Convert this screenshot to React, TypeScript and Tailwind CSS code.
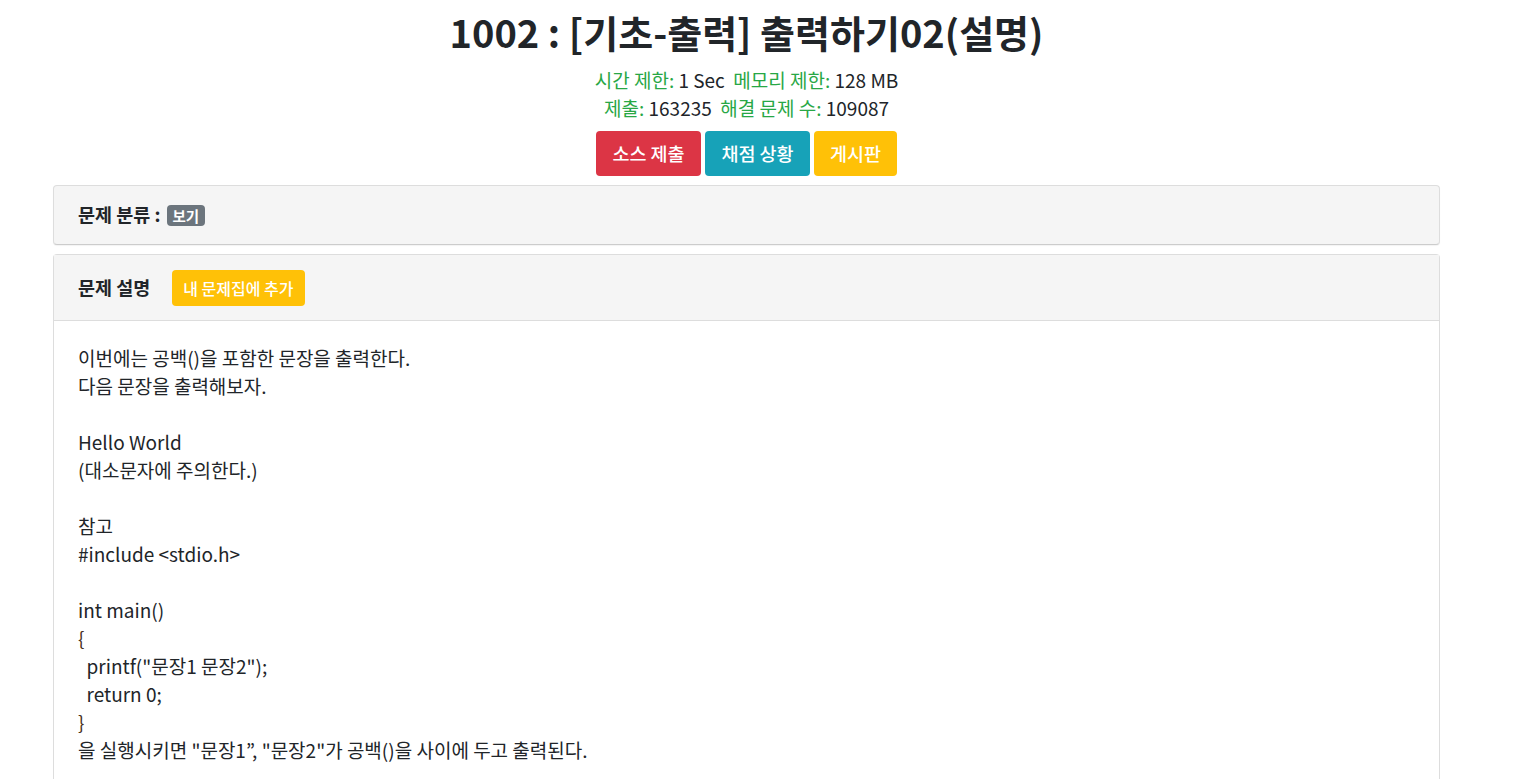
export default function App() {
  const body: (string | null)[] = [
    "이번에는 공백()을 포함한 문장을 출력한다.",
    "다음 문장을 출력해보자.",
    null,
    "Hello World",
    "(대소문자에 주의한다.)",
    null,
    "참고",
    "#include <stdio.h>",
    null,
    "int main()",
    "{",
    "  printf(\"문장1 문장2\");",
    "  return 0;",
    "}",
    "을 실행시키면 \"문장1”, \"문장2\"가 공백()을 사이에 두고 출력된다.",
    null,
  ]

  return (
    <div
      className="min-h-screen bg-white text-[#212529]"
      style={{ fontFamily: '"Noto Sans CJK KR", "Noto Sans", sans-serif' }}
    >
      <div className="ml-[53px] w-[1387px]">
        {/* Title */}
        <div className="pt-[8px] text-center">
          <h1 className="text-[38px] font-bold leading-[48px] text-[#212529]">
            1002 : [기초-출력] 출력하기02(설명)
          </h1>
          <div className="mt-[10px] text-[19px] leading-[28px]">
            <span className="text-[#28a745]">시간 제한:</span> 1 Sec&nbsp;&nbsp;
            <span className="text-[#28a745]">메모리 제한:</span> 128 MB
          </div>
          <div className="text-[19px] leading-[28px]">
            <span className="text-[#28a745]">제출:</span> 163235&nbsp;&nbsp;
            <span className="text-[#28a745]">해결 문제 수:</span> 109087
          </div>
          <div className="mt-[9px] flex justify-center gap-1">
            <button className="h-[45px] w-[105px] rounded bg-[#dc3545] text-[18.5px] font-medium text-white">
              소스 제출
            </button>
            <button className="h-[45px] w-[105px] rounded bg-[#17a2b8] text-[18.5px] font-medium text-white">
              채점 상황
            </button>
            <button className="h-[45px] w-[83px] rounded bg-[#ffc107] text-[18.5px] font-medium text-white">
              게시판
            </button>
          </div>
        </div>

        {/* Category panel */}
        <div className="mt-[9px] flex h-[60px] items-center rounded border border-[#ddd] border-b-[#ccc] bg-[#f5f5f5] px-6 shadow-[0_1px_1px_rgba(0,0,0,0.05)]">
          <span className="text-[18.5px] font-bold">문제 분류 :</span>
          <span className="ml-[6px] rounded-[4px] bg-[#6c757d] px-[6px] text-[14.5px] font-bold leading-[21px] text-white">
            보기
          </span>
        </div>

        {/* Description panel */}
        <div className="mt-[9px] rounded-t border border-[#ddd] border-b-0">
          <div className="flex h-[66px] items-center border-b border-[#ddd] bg-[#f5f5f5] px-6">
            <span className="text-[18.5px] font-bold">문제 설명</span>
            <button className="ml-[22px] h-[36px] rounded bg-[#ffc107] px-[11px] text-[16px] font-medium text-white">
              내 문제집에 추가
            </button>
          </div>
          <div className="px-6 pt-[23px] pb-4 text-[19px] leading-[28px]">
            {body.map((line, i) =>
              line === null ? (
                <div key={i} className="h-[28px]" />
              ) : (
                <div
                  key={i}
                  className={
                    line === "{" || line === "}"
                      ? "whitespace-pre text-[#4a3020]"
                      : "whitespace-pre"
                  }
                >
                  {line}
                </div>
              )
            )}
          </div>
        </div>
      </div>
    </div>
  )
}
